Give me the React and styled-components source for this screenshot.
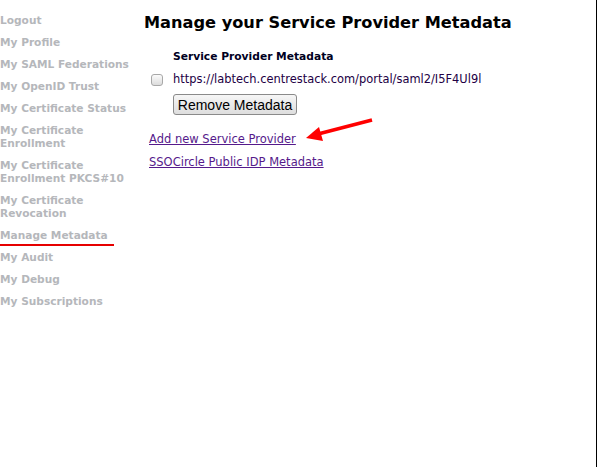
import React from 'react';
import styled, { createGlobalStyle } from 'styled-components';

const GlobalStyle = createGlobalStyle`
  html, body {
    margin: 0;
    padding: 0;
    background: #fff;
  }
  body {
    font-family: "DejaVu Sans", Verdana, sans-serif;
  }
`;

const Page = styled.div`
  position: relative;
  width: 597px;
  height: 467px;
  box-sizing: border-box;
  border-right: 1px solid #000;
  display: flex;
  overflow: hidden;
`;

const Sidebar = styled.ul`
  list-style: none;
  margin: 0;
  padding: 14px 0 0;
  width: 134px;
  flex-shrink: 0;
  display: flex;
  flex-direction: column;
  gap: 9px;
`;

const NavItem = styled.li`
  font-size: 10.6px;
  font-weight: bold;
  line-height: 13px;
  color: #b5b7bb;
  width: ${({ active }) => (active ? '114px' : 'auto')};
  position: relative;
  &::after {
    content: '';
    display: ${({ active }) => (active ? 'block' : 'none')};
    position: absolute;
    left: 0;
    right: 0;
    bottom: -4px;
    height: 2px;
    background: #e60000;
  }
`;

const Main = styled.div`
  flex: 1;
  padding: 12px 0 0 10px;
  position: relative;
`;

const Heading = styled.h1`
  margin: 0;
  font-size: 16.2px;
  line-height: 22px;
  font-weight: bold;
  color: #000;
`;

const MetaBlock = styled.div`
  margin: 15px 0 0 7px;
  display: grid;
  grid-template-columns: 22px auto;
  row-gap: 6px;
  align-items: center;
`;

const BlockTitle = styled.div`
  grid-column: 2;
  font-size: 10.7px;
  font-weight: bold;
  line-height: 16px;
  color: #000022;
`;

const Check = styled.input`
  appearance: none;
  margin: 1px 0 0;
  width: 12px;
  height: 12px;
  border: 1px solid #a8a8a8;
  border-radius: 3px;
  background: linear-gradient(#fbfbfb, #dcdcdc);
`;

const Url = styled.span`
  font-size: 11.45px;
  line-height: 17px;
  color: #220044;
`;

const Button = styled.button`
  grid-column: 2;
  justify-self: start;
  height: 21px;
  width: 124px;
  padding: 0;
  font-family: "Liberation Sans", Arial, sans-serif;
  font-size: 14px;
  color: #000;
  border: 1px solid #8a8a8a;
  border-radius: 3px;
  background: linear-gradient(#f6f6f6, #dedede);
`;

const Links = styled.div`
  margin: 16px 0 0 5px;
  display: flex;
  flex-direction: column;
  align-items: flex-start;
  gap: 7px;
`;

const Link = styled.a`
  font-size: 11.5px;
  line-height: 16px;
  color: #551a8b;
  text-decoration: underline;
  position: relative;
`;

const Arrow = styled.svg`
  position: absolute;
  left: 157px;
  top: -12px;
  overflow: visible;
`;

const nav = [
  'Logout',
  'My Profile',
  'My SAML Federations',
  'My OpenID Trust',
  'My Certificate Status',
  'My Certificate Enrollment',
  'My Certificate Enrollment PKCS#10',
  'My Certificate Revocation',
  'Manage Metadata',
  'My Audit',
  'My Debug',
  'My Subscriptions',
];

export default function App() {
  return (
    <>
      <GlobalStyle />
      <Page>
        <Sidebar>
          {nav.map((n) => (
            <NavItem key={n} active={n === 'Manage Metadata'}>
              {n}
            </NavItem>
          ))}
        </Sidebar>
        <Main>
          <Heading>Manage your Service Provider Metadata</Heading>
          <MetaBlock>
            <BlockTitle>Service Provider Metadata</BlockTitle>
            <Check type="checkbox" />
            <Url>https://labtech.centrestack.com/portal/saml2/I5F4Ul9l</Url>
            <Button>Remove Metadata</Button>
          </MetaBlock>
          <Links>
            <Link href="#">
              Add new Service Provider
              <Arrow width="68" height="24" viewBox="0 0 68 24">
                <line x1="66" y1="1" x2="12" y2="15" stroke="#f00" strokeWidth="3.5" />
                <polygon points="0,19 13,8 17,22" fill="#f00" />
              </Arrow>
            </Link>
            <Link href="#">SSOCircle Public IDP Metadata</Link>
          </Links>
        </Main>
      </Page>
    </>
  );
}
